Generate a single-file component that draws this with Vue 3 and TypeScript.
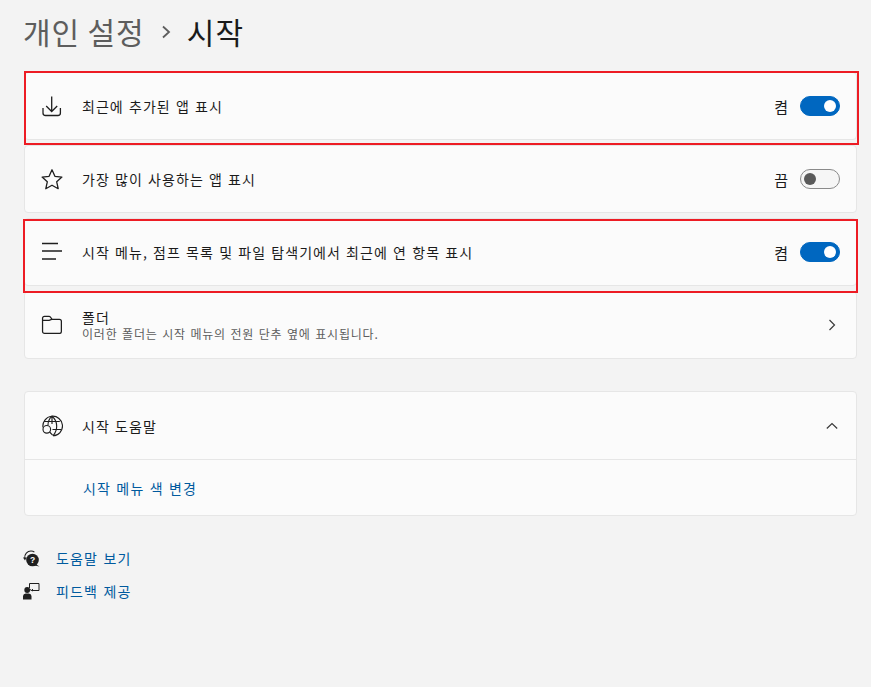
<script setup lang="ts">
interface Row {
  id: string
  label: string
  on: boolean
  highlight: boolean
}

const rows: Row[] = [
  { id: 'recent', label: '최근에 추가된 앱 표시', on: true, highlight: true },
  { id: 'most', label: '가장 많이 사용하는 앱 표시', on: false, highlight: false },
  { id: 'jump', label: '시작 메뉴, 점프 목록 및 파일 탐색기에서 최근에 연 항목 표시', on: true, highlight: true }
]
</script>

<template>
  <div class="page">
    <h1 class="title">
      <span class="crumb">개인 설정</span>
      <svg class="sep" width="10" height="14" viewBox="0 0 10 14"><path d="M2 1.500 8 7 2 12.500" fill="none" stroke="#5d5d5d" stroke-width="1.800" /></svg>
      <span class="current">시작</span>
    </h1>

    <div class="list">
      <div v-for="row in rows" :key="row.id" class="card row" :class="{ marked: row.highlight, second: row.id === 'jump' }">
        <svg v-if="row.id === 'recent'" class="icon" width="22" height="22" viewBox="0 0 22 22">
          <path d="M10.700 1.500v15M5.200 11l5.500 5.500 5.500-5.500M2 13v5a2.500 2.500 0 0 0 2.500 2.500h12.400a2.500 2.500 0 0 0 2.500-2.500v-5" fill="none" stroke="#1f1f1f" stroke-width="1.300" />
        </svg>
        <svg v-else-if="row.id === 'most'" class="icon" width="22" height="22" viewBox="0 0 22 22">
          <path d="m11 1.800 2.900 6.500 7 .8-5.200 4.700 1.500 6.900L11 17.200l-6.200 3.500 1.500-6.900L1.100 9.100l7-.8z" fill="none" stroke="#1f1f1f" stroke-width="1.300" stroke-linejoin="round" />
        </svg>
        <svg v-else class="icon" width="22" height="22" viewBox="0 0 22 22">
          <path d="M1 2.500h16M1 10h20M1 18h14" fill="none" stroke="#1f1f1f" stroke-width="1.300" />
        </svg>
        <span class="label">{{ row.label }}</span>
        <span class="state">{{ row.on ? '켬' : '끔' }}</span>
        <span class="toggle" :class="{ on: row.on }"><span class="knob"></span></span>
      </div>

      <div class="card row">
        <svg class="icon" width="22" height="22" viewBox="0 0 22 22">
          <path d="M1.600 4.500v14a2 2 0 0 0 2 2h16a2 2 0 0 0 1.400-2V8a2 2 0 0 0-2-2H11.500L9.500 3.500A1.500 1.500 0 0 0 8.300 3H3.600a2 2 0 0 0-2 1.500V7h6.800l2.500-1" fill="none" stroke="#1f1f1f" stroke-width="1.300" transform="translate(0 -.5) scale(.97 .97)" />
        </svg>
        <span class="label two-line">
          <span class="name">폴더</span>
          <small>이러한 폴더는 시작 메뉴의 전원 단추 옆에 표시됩니다.</small>
        </span>
        <svg class="chevron" width="8" height="12" viewBox="0 0 8 12"><path d="M1.500 1 6.500 6l-5 5" fill="none" stroke="#3a3a3a" stroke-width="1.200" /></svg>
      </div>
    </div>

    <div class="card help">
      <div class="row help-head">
        <svg class="icon" width="22" height="22" viewBox="0 0 22 22">
          <g fill="none" stroke="#1f1f1f" stroke-width="1.150">
            <path d="M3.300 6.500h15.500M11.500 14.500h8.500M2 12.500A9.800 9.800 0 1 1 12 20.800" />
            <path d="M7 10C7 6.500 8.500 3.500 11 1.200c3 2.500 4.700 5.800 4.700 9.800 0 4-1.500 7.300-3.700 9.800M11 1.200V9" />
            <circle cx="5.800" cy="14.300" r="3.800" />
            <path d="m8.600 17 3 3.200" />
          </g>
        </svg>
        <span class="label">시작 도움말</span>
        <svg class="chevron up" width="12" height="8" viewBox="0 0 12 8"><path d="M.8 6.500 6 1.500l5.200 5" fill="none" stroke="#3a3a3a" stroke-width="1.200" /></svg>
      </div>
      <div class="help-body">
        <span class="link">시작 메뉴 색 변경</span>
      </div>
    </div>

    <div class="footer">
      <div class="foot-row">
        <svg width="18" height="18" viewBox="0 0 18 18">
          <path d="M1.800 9A6.200 6.200 0 0 1 8 2c1.400 0 2.500.4 3.400 1.200" fill="none" stroke="#1f1f1f" stroke-width="1.100" />
          <path d="M0 8.500h3.500L2 11.500z" fill="#1f1f1f" />
          <circle cx="9.500" cy="11" r="6.300" fill="#1f1f1f" />
          <path d="m12.500 15 4 2.500-5-1z" fill="#1f1f1f" />
          <text x="9.500" y="14" text-anchor="middle" font-size="8.500" font-weight="700" fill="#fff" font-family="Liberation Sans, sans-serif">?</text>
        </svg>
        <span class="link">도움말 보기</span>
      </div>
      <div class="foot-row">
        <svg width="18" height="18" viewBox="0 0 18 18">
          <circle cx="4.200" cy="8" r="2.900" fill="#1f1f1f" />
          <path d="M0 17.500v-3.500A2.800 2.800 0 0 1 2.800 11.500h2.900A2.800 2.800 0 0 1 8.500 14v3.500z" fill="#1f1f1f" />
          <path d="M6.500 6V1.500h9.500v7H9.500M7 7.500l2.500 1.500V7" fill="none" stroke="#1f1f1f" stroke-width="1" />
        </svg>
        <span class="link">피드백 제공</span>
      </div>
    </div>
  </div>
</template>

<style scoped>
.page {
  box-sizing: border-box;
  width: 871px;
  height: 687px;
  padding: 0 14px 0 24px;
  background: #f3f3f3;
  font-family: 'Noto Sans CJK KR', 'Noto Sans', sans-serif;
  color: #1b1b1b;
  overflow: hidden;
}

.title {
  display: flex;
  align-items: center;
  gap: 16px;
  height: 72px;
  margin: 0 0 0 -1px;
  padding-bottom: 10px;
  box-sizing: border-box;
  font-size: 30px;
  font-weight: 400;
  letter-spacing: 0.9px;
}

.crumb {
  color: #5d5d5d;
}

.current {
  color: #1a1a1a;
  letter-spacing: 1.3px;
}

.sep {
  margin-top: 2px;
}

.list {
  display: flex;
  flex-direction: column;
  gap: 5px;
}

.card {
  box-sizing: border-box;
  width: 833px;
  background: #fbfbfb;
  border: 1px solid #e6e6e6;
  border-radius: 4px;
}

.row {
  box-sizing: border-box;
  position: relative;
  display: flex;
  align-items: center;
  height: 68px;
  padding: 0 16px;
}

.marked {
  z-index: 1;
}

.marked::after {
  content: '';
  position: absolute;
  left: -1px;
  right: -3px;
  top: -2px;
  bottom: -6px;
  border: 2px solid #ed1c24;
  pointer-events: none;
}

.second::after {
  left: -2px;
  right: -2px;
  top: 0;
  bottom: -8px;
}

.icon {
  flex: none;
  margin-right: 19px;
}

.label {
  flex: 1;
  font-size: 14px;
  letter-spacing: 1.05px;
  word-spacing: 1px;
}

.two-line {
  display: flex;
  flex-direction: column;
}

.name {
  line-height: 18px;
}

.two-line small {
  font-size: 12px;
  line-height: 16px;
  color: #5d5d5d;
  letter-spacing: 0.82px;
}

.state {
  font-size: 15px;
  margin-right: 12px;
}

.toggle {
  box-sizing: border-box;
  display: flex;
  align-items: center;
  width: 40px;
  height: 20px;
  padding: 0 3px;
  border: 1px solid #8a8a8a;
  border-radius: 10px;
  background: #f6f6f6;
}

.knob {
  width: 12px;
  height: 12px;
  border-radius: 50%;
  background: #5a5a5a;
}

.toggle.on {
  justify-content: flex-end;
  background: #0067c0;
  border-color: #0067c0;
}

.toggle.on .knob {
  background: #ffffff;
}

.chevron {
  flex: none;
  margin-right: 4px;
}

.up {
  margin-right: 2px;
}

.help {
  margin-top: 32px;
  height: 125px;
}

.help-head {
  border-bottom: 1px solid #e6e6e6;
}

.help-body {
  display: flex;
  align-items: center;
  height: 55px;
  padding-left: 58px;
}

.link {
  color: #005a9e;
  font-size: 14px;
  letter-spacing: 1.15px;
  word-spacing: 1px;
}

.footer {
  display: flex;
  flex-direction: column;
  gap: 11px;
  margin-top: 31px;
}

.foot-row {
  display: flex;
  align-items: center;
  gap: 15px;
  height: 22px;
}

.foot-row svg {
  margin-left: -1px;
}
</style>

<style>
html,
body {
  background: #f3f3f3;
}
</style>
